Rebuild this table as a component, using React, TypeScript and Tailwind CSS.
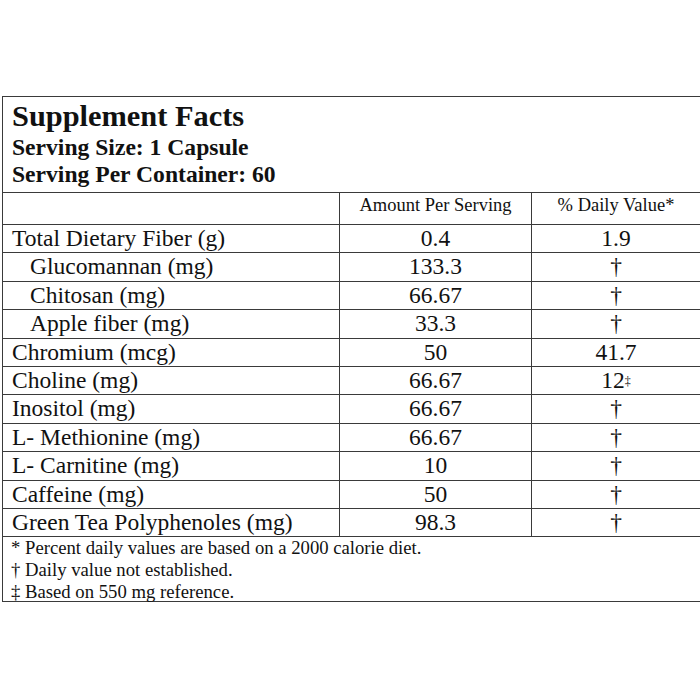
import React from "react";

const rows: { name: string; indent?: boolean; amt: string; dv: React.ReactNode }[] = [
  { name: "Total Dietary Fiber (g)", amt: "0.4", dv: "1.9" },
  { name: "Glucomannan (mg)", indent: true, amt: "133.3", dv: "†" },
  { name: "Chitosan (mg)", indent: true, amt: "66.67", dv: "†" },
  { name: "Apple fiber (mg)", indent: true, amt: "33.3", dv: "†" },
  { name: "Chromium (mcg)", amt: "50", dv: "41.7" },
  { name: "Choline (mg)", amt: "66.67", dv: (<span>12<sup className="text-[12px] relative -top-[3px]">‡</sup></span>) },
  { name: "Inositol (mg)", amt: "66.67", dv: "†" },
  { name: "L- Methionine (mg)", amt: "66.67", dv: "†" },
  { name: "L- Carnitine (mg)", amt: "10", dv: "†" },
  { name: "Caffeine (mg)", amt: "50", dv: "†" },
  { name: "Green Tea Polyphenoles (mg)", amt: "98.3", dv: "†" },
];

export default function App() {
  return (
    <div
      className="w-[700px] h-[700px] bg-white overflow-hidden text-[#111]"
      style={{ fontFamily: '"Liberation Serif", "Times New Roman", serif' }}
    >
      <div className="pt-[96px] pl-[2px]">
        <div className="w-[720px] border-[1.5px] border-[#3a3a3a]">
          <div className="h-[95px] pl-[9px] pt-[1px]">
            <div className="text-[30.4px] font-bold leading-[36px]">Supplement Facts</div>
            <div className="text-[23.6px] font-bold leading-[27px]">Serving Size: 1 Capsule</div>
            <div className="text-[23.6px] font-bold leading-[27px]">Serving Per Container: 60</div>
          </div>
          <div className="flex h-[32px] border-t-[1.5px] border-[#3a3a3a] text-[18.5px]">
            <div className="w-[337px] border-r-[1.5px] border-[#3a3a3a]" />
            <div className="w-[192px] border-r-[1.5px] border-[#3a3a3a] text-center leading-[24px]">Amount Per Serving</div>
            <div className="w-[168px] text-center leading-[24px]">% Daily Value*</div>
          </div>
          {rows.map((r) => (
            <div key={r.name} className="flex h-[28.4px] border-t-[1.5px] border-[#3a3a3a] text-[23.5px] leading-[27px]">
              <div className={`w-[337px] border-r-[1.5px] border-[#3a3a3a] whitespace-nowrap ${r.indent ? "pl-[27px]" : "pl-[9px]"}`}>{r.name}</div>
              <div className="w-[192px] border-r-[1.5px] border-[#3a3a3a] text-center">{r.amt}</div>
              <div className="w-[168px] text-center">{r.dv}</div>
            </div>
          ))}
          <div className="border-t-[1.5px] border-[#3a3a3a] pl-[8px] h-[65px] text-[18.7px] leading-[22px] whitespace-nowrap">
            <div>* Percent daily values are based on a 2000 calorie diet.</div>
            <div>† Daily value not established.</div>
            <div>‡ Based on 550 mg reference.</div>
          </div>
        </div>
      </div>
    </div>
  );
}
